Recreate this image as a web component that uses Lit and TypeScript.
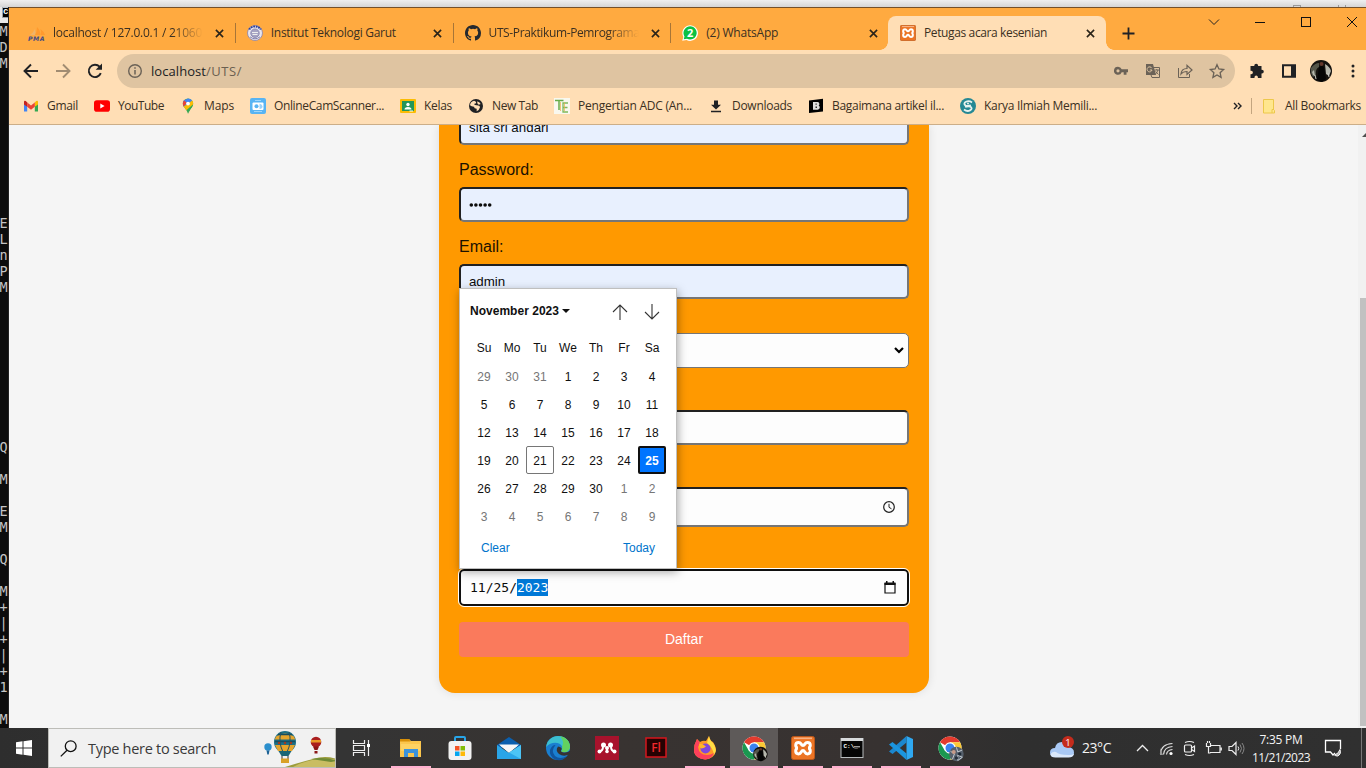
import { LitElement, html, svg, css, nothing } from "lit";
import { customElement, property, state } from "lit/decorators.js";
import { classMap } from "lit/directives/class-map.js";

/* A single line of text whose tracking is adjusted to fill a set width. */
@customElement("fit-text")
class FitText extends LitElement {
  static styles = css`
    :host { display: inline-block; white-space: pre; flex: none; }
    span { display: inline-block; }
  `;
  @property({ type: Number }) w = 0;
  @property() text = "";
  @state() spacing = 0;
  firstUpdated() {
    const span = this.renderRoot.querySelector("span") as HTMLElement;
    const natural = span.getBoundingClientRect().width;
    if (this.w && natural) this.spacing = (this.w - natural) / this.text.length;
  }
  render() {
    return html`<span style="letter-spacing:${this.spacing}px">${this.text}</span>`;
  }
}

const icon = (w: number, h: number, vb: string, body: unknown) =>
  html`<svg width=${w} height=${h} viewBox=${vb}>${body}</svg>`;

const xampp = svg`
  <rect x="0.5" y="0.5" width="23" height="23" rx="2" fill="#ec7424" stroke="#b9561a"/>
  <rect x="3" y="1.5" width="18" height="1.6" fill="#f7b183"/>
  <path d="M7.6 6.4c-2.1 0-2.9 1.400-2.900 2.900 0 1.700 1.300 2.700 2.300 2.700-1.100 0-2.300 1.200-2.300 3 0 1.600 1 2.900 2.900 2.900 2.900 0 2.300-3.300 4.400-3.300s1.500 3.300 4.400 3.300c1.900 0 2.900-1.300 2.900-2.900 0-1.800-1.200-3-2.300-3 1 0 2.300-1 2.300-2.700 0-1.500-.8-2.900-2.900-2.900-2.900 0-2.300 3.100-4.400 3.100s-1.500-3.100-4.400-3.100z" fill="none" stroke="#fff" stroke-width="3"/>`;

const chrome = svg`
  <circle cx="12" cy="12" r="11.500" fill="#fff"/>
  <path d="M12 12 2 6.200A11.600 11.600 0 0 1 22.100 6.300H12z" fill="#e33b2e"/>
  <path d="M12 6.300H22.100A11.600 11.600 0 0 1 12 23.600l5-8.700z" fill="#fcc934"/>
  <path d="M7 14.900 2 6.200A11.600 11.600 0 0 0 12 23.600l5-8.700z" fill="#1a9850"/>
  <circle cx="12" cy="12" r="5.700" fill="#fff"/><circle cx="12" cy="12" r="4.500" fill="#3b82f0"/>`;

const person = svg`
  <circle cx="12" cy="12" r="11" fill="#15120f"/>
  <path d="M2 9q4-5 8-5v4q-4 2-3 8l-3 2Q1 14 2 9z" fill="#55564a"/>
  <path d="M16 5q5 3 6 7l-2 5-3-2zM3 13l2-2 1 6-2-1z" fill="#b5b6ac"/>
  <circle cx="12.500" cy="5" r="2" fill="#63372c"/>
  <path d="M10 8q3-2 5 0l2 12-4 3-5-2z" fill="#050505"/>
  <path d="M19 14l1 4M6 16l1 4" stroke="#c9c9c2" stroke-width="1"/>`;

const favicons = {
  pma: icon(18, 16, "0 0 18 16", svg`
    <path d="M7 10Q9 7 9 2q4 4 3 8zM12.500 10q1-3 0-6 4 3 4.500 6z" fill="#ff9a2e"/>
    <path d="M2 10q3-2 5-6 1 3 0 6z" fill="#f0b46a"/>
    <text x="0" y="15.500" font-family="DejaVu Sans" font-weight="bold" font-style="italic" font-size="6.200" textLength="16.500" fill="#454c82">PMA</text>`),
  itg: icon(16, 16, "0 0 16 16", svg`
    <circle cx="8" cy="8" r="7.500" fill="#e8e5ee" stroke="#8883ad" stroke-width=".8"/>
    <path d="M2.200 4.500A7 7 0 0 1 13.800 4.500" fill="none" stroke="#30439b" stroke-width="2" stroke-dasharray="1.800 .7"/>
    <circle cx="8" cy="8.200" r="4.200" fill="#a7a4c3" stroke="#8f8db5"/><path d="M5 7.500h6M5.500 9.500h5" stroke="#eee"/>
    <path d="M3 11.800q5 4 10 0" fill="none" stroke="#8583ad"/>`),
  github: icon(16, 16, "0 0 16 16", svg`<path fill="#24292f" d="M8 0C3.580 0 0 3.580 0 8c0 3.540 2.290 6.530 5.470 7.590.4.070.55-.17.55-.38v-1.490c-2.010.37-2.530-.49-2.690-.94-.09-.23-.48-.94-.82-1.130-.28-.15-.68-.52-.01-.53.63-.01 1.080.58 1.230.82.72 1.210 1.870.87 2.330.66.070-.52.28-.87.51-1.070-1.780-.2-3.640-.89-3.640-3.950 0-.87.31-1.590.82-2.150-.08-.2-.36-1.020.08-2.120 0 0 .67-.21 2.200.82a7.600 7.600 0 0 1 4 0c1.530-1.040 2.200-.82 2.200-.82.44 1.100.16 1.920.08 2.120.51.56.82 1.270.82 2.150 0 3.070-1.870 3.750-3.650 3.950.29.25.54.73.54 1.480v2.200c0 .21.15.46.55.38A8 8 0 0 0 16 8c0-4.420-3.580-8-8-8z"/>`),
  wa: icon(16, 16, "0 0 16 16", svg`
    <path d="M.2 15.800 1.400 12A7.800 7.800 0 1 1 4.500 15z" fill="#fff"/>
    <path d="M1.700 14.300 2.500 11.500A6.600 6.600 0 1 1 5 13.800z" fill="#0bc142"/>
    <text x="8.200" y="12" text-anchor="middle" font-family="Open Sans" font-weight="bold" font-size="11" fill="#fff">2</text>`),
  xampp: icon(16, 16, "0 0 24 24", xampp),
};

const closeX = icon(9, 9, "0 0 9 9", svg`<path d="M.9.9l7.200 7.200M8.100.9.9 8.100" stroke="#2b2419" stroke-width="1.600"/>`);

const tabs = [
  { icon: favicons.pma, title: "localhost / 127.0.0.1 / 21060", w: 149, fade: true },
  { icon: favicons.itg, title: "Institut Teknologi Garut", w: 125 },
  { icon: favicons.github, title: "UTS-Praktikum-Pemrograma", w: 151, fade: true },
  { icon: favicons.wa, title: "(2) WhatsApp", w: 72 },
  { icon: favicons.xampp, title: "Petugas acara kesenian", w: 123, active: true },
];

const bookmarks = [
  { t: "Gmail", w: 31, i: icon(16, 16, "0 0 16 16", svg`
    <path d="M1 4v9.500h3.200V7z" fill="#4285f4"/><path d="M11.800 7v6.500H15V4z" fill="#34a853"/>
    <path d="M1 3.800v2.600l3.200 2.400V4.500L2.800 3Q1 2.300 1 3.800z" fill="#c5221f"/>
    <path d="M11.800 4.500v4.300L15 6.400V3.800Q15 2.300 13.200 3z" fill="#fbbc04"/>
    <path d="M4.200 4.500v4.300L8 11.700l3.800-2.900V4.500L8 7.400z" fill="#ea4335"/>`) },
  { t: "YouTube", w: 46, i: icon(16, 16, "0 0 16 16", svg`<rect x="0" y="2.300" width="16" height="11.400" rx="2.800" fill="#f00"/><path d="M6.300 5.500v5L10.600 8z" fill="#fff"/>`) },
  { t: "Maps", w: 30, i: icon(16, 16, "0 0 16 16", svg`
    <path d="M8 .4A5.200 5.200 0 0 0 2.800 5.600c0 3.800 3.700 5 5.200 10.200 1.500-5.200 5.200-6.400 5.200-10.200A5.200 5.200 0 0 0 8 .4z" fill="#34a853"/>
    <path d="M3.600 8.600 12 2.200q1.600 1.600 1.100 4.400L6.300 12.200Q5 10.500 3.600 8.600z" fill="#fbbc04"/>
    <path d="M8 .4q2.500 0 4.100 2L3.600 8.600Q2 4 4 2.200z" fill="#4285f4"/><path d="M4 2.200 7 5 3.600 8.600Q2 5 4 2.200z" fill="#ea4335"/>
    <path d="M9 10.500l4-4q-.3 2.200-2.500 4.700L8 15.800z" fill="#34a853"/><circle cx="8" cy="5.600" r="1.900" fill="#fff"/>`) },
  { t: "OnlineCamScanner...", w: 110, i: icon(16, 16, "0 0 16 16", svg`
    <rect width="16" height="16" rx="2" fill="#58b4f3"/><rect x="2.500" y="4.500" width="11" height="7.500" rx="1" fill="#fff"/>
    <circle cx="6.500" cy="8.300" r="2" fill="#58b4f3"/><path d="M9.500 5.500v5.500q3-.5 3-2.500t-3-3z" fill="#9dd2f7"/><path d="M5 2.500h6M4 13.500h8" stroke="#9fd6fb"/>`) },
  { t: "Kelas", w: 28, i: icon(16, 16, "0 0 16 16", svg`
    <rect y="1" width="16" height="14" rx="1" fill="#fbbc04"/><rect x="2" y="3" width="12" height="10" fill="#24965a"/>
    <circle cx="8" cy="6.500" r="1.700" fill="#fff"/><path d="M4.500 11.500q0-2.600 3.500-2.600t3.500 2.600z" fill="#fff"/><path d="M9.500 13h3.500" stroke="#fff"/>`) },
  { t: "New Tab", w: 46, i: icon(16, 16, "0 0 24 24", svg`
    <circle cx="12" cy="12" r="10.500" fill="#202124"/><path d="M9 4q4 1 3 4l-3 1q1 2 4 2 5 0 5 3l-2 4-3 2v-4q-4 0-4-3-4 0-6-2 0-5 6-7z" fill="#ffdeb5"/><path d="M14 5q4 2 5 4l-3 1-2-2z" fill="#ffdeb5"/>`) },
  { t: "Pengertian ADC (An...", w: 114, i: icon(16, 16, "0 0 16 16", svg`
    <rect width="16" height="16" fill="#f9f8ef"/><path d="M1 2.500h8.500M5 3v9" stroke="#67ad4b" stroke-width="1.500"/>
    <path d="M14 5H9v9h5M9 9.500h4.500" fill="none" stroke="#7db95d" stroke-width="1.300"/><path d="M6.500 4v9M10.500 4.500v9" stroke="#e8ae4a" stroke-width=".7"/>`) },
  { t: "Downloads", w: 60, i: icon(16, 16, "0 0 16 16", svg`<path d="M6 2.500h4v4.300h3L8 11.500 3 6.800h3zM3 12.700h10v1.600H3z" fill="#202124"/>`) },
  { t: "Bagaimana artikel il...", w: 112, i: icon(16, 16, "0 0 16 16", svg`
    <path d="M1 2.500 15 .8V13.500L1 15z" fill="#000"/><path fill-rule="evenodd" d="M5 4h4.600q1.800.1 1.800 2 0 1.100-.8 1.600 1.200.5 1.200 1.900 0 2.100-2.200 2.300H5zM7.600 5.600v1.200h1V5.600zM7.600 8.600v1.500h1.200V8.600z" fill="#ddd"/>`) },
  { t: "Karya Ilmiah Memili...", w: 113, i: icon(16, 16, "0 0 16 16", svg`
    <circle cx="8" cy="8" r="8" fill="#258894"/><path d="M12 4.500Q9 2.300 6 3.800T5.500 7.600q3 .8 5.400-.2M4 11.500q3 2.500 6 .9t.5-3.800q-2.800-.8-5.400.4" fill="none" stroke="#e8f2ee" stroke-width="1.800"/><circle cx="8" cy="5.500" r="1" fill="#e8f2ee"/>`) },
];

const folder = icon(12, 15, "0 0 12 15", svg`<path d="M.5.500h10V10.500l1 1V14H.5z" fill="#ffe68e" stroke="#ecc84b"/><path d="M9 14v-3.500h2" fill="none" stroke="#ecc84b"/>`);

const consoleRows: Record<number, string> = {
  0: "M", 1: "D", 2: "M", 12: "E", 13: "L", 14: "n", 15: "P", 16: "M", 26: "Q", 28: "M", 30: "E", 31: "M",
  33: "Q", 35: "M", 36: "+", 37: "|", 38: "+", 39: "|", 40: "+", 41: "1", 43: "M",
};

@customElement("console-strip")
class ConsoleStrip extends LitElement {
  static styles = css`
    :host { display: block; width: 9px; overflow: hidden; background: #0c0c0c; border-right: 1px solid #222; box-sizing: border-box;
      font: 13.5px/16px "DejaVu Sans Mono", monospace; color: #c4c4c4; }
    .title { height: 16px; padding: 0 0 0 2px; background: #e9e9e9; box-sizing: border-box; overflow: hidden; }
    .cmd { width: 16px; height: 12px; background: #000; border: 1px solid #9aa3a8; border-top: 2px solid #b9c4cf; box-sizing: border-box;
      color: #fff; font: bold 9px/9px "Liberation Mono", monospace; margin-top: -1px; }
    .row { height: 16px; margin-left: -.5px; }
    .rows { padding-top: 0; }
  `;
  render() {
    return html`<div class="title"><div class="cmd">c</div></div>
      <div class="rows">${Array.from({ length: 45 }, (_, i) => html`<div class="row">${consoleRows[i] ?? nothing}</div>`)}</div>`;
  }
}

@customElement("browser-chrome")
class BrowserChrome extends LitElement {
  static styles = css`
    :host { display: block; color: #3b3022; font: 12px/16px "Open Sans", "Noto Sans", sans-serif; }
    svg { display: block; flex: none; }
    .strip { height: 42px; background: #ffaa40; display: flex; padding-left: 8px; box-sizing: border-box; }
    .tab { width: 217.75px; height: 34px; margin-top: 8px; display: flex; align-items: center; padding: 0 12px; box-sizing: border-box; position: relative; flex: none; }
    .ico { width: 16px; margin-right: 8px; display: flex; justify-content: center; flex: none; }
    .title { flex: 1; overflow: hidden; height: 18px; line-height: 17px; }
    .fade { mask-image: linear-gradient(90deg, #000 78%, transparent 98%); }
    .title.fade { flex: none; width: 153px; margin-right: auto; }
    .close { width: 9px; margin-right: -1.5px; }
    .line { width: 1px; height: 20px; background: #a77537; position: absolute; right: -1px; top: 7px; }
    .active { background: #ffdeb5; border-radius: 8px 8px 0 0; }
    .active::before, .active::after { content: ""; position: absolute; bottom: 0; width: 8px; height: 8px; }
    .active::before { left: -8px; background: radial-gradient(circle at 0 0, transparent 7.5px, #ffdeb5 8px); }
    .active::after { right: -8px; background: radial-gradient(circle at 100% 0, transparent 7.5px, #ffdeb5 8px); }
    .plus { margin: 19px 0 0 16px; }
    .win { margin-left: auto; display: flex; align-items: center; height: 28px; padding-right: 6px; }
    .win svg { width: 16px; height: 16px; }
    .win svg:nth-child(1) { margin-right: 30px; }
    .win svg:nth-child(2), .win svg:nth-child(3) { margin-right: 30px; }
    .tools { height: 42px; background: #ffdeb5; display: flex; align-items: center; padding-left: 12px; }
    .nav { display: flex; gap: 12px; }
    .omni { width: 1118px; height: 34px; margin-left: 12px; border-radius: 17px; background: #dfc4a1; display: flex; align-items: center; padding: 0 8px; box-sizing: border-box; flex: none; font-size: 13px; color: #202124; }
    .omni .url { margin-left: 6px; }
    .path { color: #6b5f50; }
    .actions { margin-left: auto; display: flex; gap: 12px; }
    .ext { display: flex; gap: 10px; margin-left: 11px; align-items: center; }
    .marks { background: #ffdeb5; border-bottom: 1px solid #ccae88; display: flex; align-items: center; padding: 0 0 4px 14px; gap: 16px; box-sizing: border-box; height: 33px; }
    .mark { display: flex; align-items: center; flex: none; }
    .more { margin-left: auto; display: flex; align-items: center; padding-right: 5px; }
    .sep { height: 16px; width: 1px; background: #c3a57f; margin: 0 11px 0 9px; }
    .all { margin-left: 10px; }
  `;
  render() {
    const g = "#6b6257";
    return html`
      <div class="strip">
        ${tabs.map((t, i) => html`<div class=${classMap({ tab: true, active: !!t.active })}>
          <div class="ico">${t.icon}</div>
          <div class=${classMap({ title: true, fade: !!t.fade })}><fit-text .w=${t.w} .text=${t.title}></fit-text></div>
          <div class="close">${closeX}</div>
          ${i < 3 ? html`<div class="line"></div>` : nothing}
        </div>`)}
        <div class="plus">${icon(13, 13, "0 0 13 13", svg`<path d="M6.500.5v12M.5 6.500h12" stroke="#202124" stroke-width="1.800"/>`)}</div>
        <div class="win">
          ${icon(16, 16, "0 0 16 16", svg`<path d="M3 5.500l5 5 5-5" fill="none" stroke="#222"/>`)}
          ${icon(16, 16, "0 0 16 16", svg`<path d="M3 8.500h10" stroke="#111"/>`)}
          ${icon(16, 16, "0 0 16 16", svg`<rect x="3.500" y="3.500" width="9" height="9" fill="none" stroke="#111"/>`)}
          ${icon(16, 16, "0 0 16 16", svg`<path d="M3 3l10 10M13 3 3 13" stroke="#111"/>`)}
        </div>
      </div>
      <div class="tools">
        <div class="nav">
          ${icon(20, 20, "0 0 20 20", svg`<path d="M17 10H4M10 3.500 3.500 10l6.500 6.500" fill="none" stroke="#202124" stroke-width="1.900"/>`)}
          ${icon(20, 20, "0 0 20 20", svg`<path d="M3 10h13M10 3.500l6.500 6.500-6.500 6.500" fill="none" stroke="#a18c72" stroke-width="1.900"/>`)}
          ${icon(20, 20, "0 0 20 20", svg`<path d="M15.800 12.200A6.200 6.200 0 1 1 14.600 5.700L16 7.500" fill="none" stroke="#202124" stroke-width="1.900"/><path d="M17 2.500v6.300h-6.300z" fill="#202124"/>`)}
        </div>
        <div class="omni">
          ${icon(20, 20, "0 0 20 20", svg`<circle cx="10" cy="10" r="6.300" fill="none" stroke="${g}" stroke-width="1.400"/><path d="M10 9v4.500M10 6.200v1.600" stroke="${g}" stroke-width="1.500"/>`)}
          <fit-text class="url" .w=${55} .text=${"localhost"}></fit-text><fit-text class="path" .w=${36} .text=${"/UTS/"}></fit-text>
          <div class="actions">
            ${icon(20, 20, "0 0 20 20", svg`<path fill-rule="evenodd" d="M7 5.800a4 4 0 1 0 3.700 5.400h2v2.500h2.800v-2.500H17V8.300h-6.300A4 4 0 0 0 7 5.800zM7 8.200a1.600 1.600 0 1 1 0 3.200 1.600 1.600 0 0 1 0-3.200z" fill="${g}"/>`)}
            ${icon(20, 20, "0 0 20 20", svg`<path d="M8 6.500h8.500v10H9L8 14z" fill="none" stroke="${g}"/><path d="M3 3h7l3 11H3z" fill="${g}"/><path d="M8.800 7.200A2.500 2.500 0 1 0 9 9H6.800" fill="none" stroke="#dfc4a1"/><path d="M11.500 9H16M13.800 8v1M15 9q-1 3-3 4.500M12.500 10.500l3 3" fill="none" stroke="${g}" stroke-width=".9"/>`)}
            ${icon(20, 20, "0 0 20 20", svg`<path d="M3.500 7v9.500h11V13" fill="none" stroke="${g}"/><path d="M6 13q.5-5.500 6-5.500V4.300l5 4.700-5 4.500V10.500q-4 0-6 2.500z" fill="none" stroke="${g}" stroke-width="1.200"/>`)}
            ${icon(20, 20, "0 0 20 20", svg`<path d="M10 3.700l1.900 4.300 4.700.5-3.500 3.200 1 4.700L10 14l-4.100 2.400 1-4.700-3.500-3.200 4.700-.5z" fill="none" stroke="${g}" stroke-width="1.300"/>`)}
          </div>
        </div>
        <div class="ext">
          ${icon(22, 20, "0 0 22 20", svg`<path d="M5 5h3.300V4.600a1.900 1.900 0 0 1 3.800 0V5h3.400v3.700h.4a1.900 1.900 0 0 1 0 3.800h-.4V17h-3.600v-.7a1.700 1.700 0 0 0-3.400 0v.7H4.500v-3.800h.7a1.700 1.700 0 0 0 0-3.400H4.500V5z" fill="#202124"/>`)}
          ${icon(22, 20, "0 0 22 20", svg`<path fill-rule="evenodd" d="M4 3.200h14v13.600H4zM6 5.200v9.600h7V5.200z" fill="#202124"/>`)}
          ${icon(22, 22, "1 1 22 22", person)}
          ${icon(22, 20, "0 0 22 20", svg`<circle cx="11" cy="5" r="1.500" fill="#202124"/><circle cx="11" cy="10" r="1.500" fill="#202124"/><circle cx="11" cy="15" r="1.500" fill="#202124"/>`)}
        </div>
      </div>
      <div class="marks">
        ${bookmarks.map((b) => html`<div class="mark"><div class="ico">${b.i}</div><fit-text .w=${b.w} .text=${b.t}></fit-text></div>`)}
        <div class="more">
          ${icon(9, 8, "0 0 9 8", svg`<path d="M1 1l3 3-3 3M5 1l3 3-3 3" fill="none" stroke="#202124" stroke-width="1.400"/>`)}
          <div class="sep"></div>${folder}<fit-text class="all" .w=${76} .text=${"All Bookmarks"}></fit-text>
        </div>
      </div>`;
  }
}

const days = [29, 30, 31, ...Array.from({ length: 30 }, (_, i) => i + 1), 1, 2, 3, 4, 5, 6, 7, 8, 9];

@customElement("date-popup")
class DatePopup extends LitElement {
  static styles = css`
    :host { display: block; box-sizing: border-box; width: 218px; height: 281px; background: #fff; border: 1px solid #bfbfbf; box-shadow: 1px 3px 9px rgba(0, 0, 0, .35);
      font: 12px/28px "Liberation Sans", Arial, sans-serif; color: #101010; padding: 0 10px; }
    .head { display: flex; height: 44px; align-items: center; font-weight: bold; }
    .tri { border: 4px solid transparent; border-top: 4px solid #101010; border-bottom: 0; margin-left: 3px; }
    .arrows { margin-left: auto; display: flex; gap: 16px; padding: 2px 6px 0 0; }
    .grid { display: grid; grid-template-columns: repeat(7, 28px); text-align: center; }
    .names { height: 29px; box-sizing: border-box; padding-top: 1px; }
    .day { height: 28px; box-sizing: border-box; padding-top: 1px; }
    .out { color: #767676; }
    .today { border: 1px solid #767676; border-radius: 2px; padding: 0; line-height: 28px; }
    .sel { border: 2px solid #101010; border-radius: 2px; background: #0075ff; color: #fff; font-weight: bold; line-height: 26px; padding: 0; }
    .foot { display: flex; justify-content: space-between; padding: 4px 11px 0; color: #0074cc; }
  `;
  render() {
    return html`
      <div class="head"><fit-text .w=${89} .text=${"November 2023"}></fit-text><span class="tri"></span>
        <div class="arrows">
          ${icon(16, 16, "0 0 16 16", svg`<path d="M8 16V.8M1 8l7-7 7 7" fill="none" stroke="#333" stroke-width="1.100"/>`)}
          ${icon(16, 16, "0 0 16 16", svg`<path d="M8 0v15.200M1 8l7 7 7-7" fill="none" stroke="#333" stroke-width="1.100"/>`)}
        </div></div>
      <div class="grid names">${["Su", "Mo", "Tu", "We", "Th", "Fr", "Sa"].map((d) => html`<span>${d}</span>`)}</div>
      <div class="grid">${days.map((d, i) => html`<span class=${classMap({ day: true, out: i < 3 || i > 32, today: i === 23, sel: i === 27 })}>${d}</span>`)}</div>
      <div class="foot"><span>Clear</span><span>Today</span></div>`;
  }
}

@customElement("form-page")
class FormPage extends LitElement {
  static styles = css`
    :host { display: flex; height: 603px; overflow: hidden; background: #f5f5f5; font: 16px "Liberation Sans", Arial, sans-serif; color: #1c1200; }
    .main { flex: 1; padding-left: 430px; }
    .card { position: relative; width: 490px; height: 568px; box-sizing: border-box; background: #ff9900; border-radius: 0 0 16px 16px; padding: 0 20px; box-shadow: 0 0 10px rgba(0, 0, 0, .1); display: flex; flex-direction: column; }
    .label { height: 42px; line-height: 49px; box-sizing: border-box; flex: none; }
    .short { height: 34px; }
    .in { height: 35px; flex: none; box-sizing: border-box; border: 2px solid; border-color: #212121 #767676 #767676 #212121; border-radius: 5px; background: #fdfdfd; padding: 0 8px; display: flex; align-items: center; font-size: 13.333px; color: #0b0b0b; }
    .auto { background: #e8f0fe; }
    .top { margin-top: -15px; }
    .select { border: 1px solid #767676; justify-content: flex-end; padding-right: 4px; }
    .time { height: 40px; justify-content: flex-end; padding-right: 12px; }
    .date { height: 37px; border-color: #101010; outline: 1px solid #fff; padding: 0 11px 0 8px; font: 13px/17px "DejaVu Sans Mono", monospace; justify-content: space-between; }
    .segs { display: flex; margin-left: 1px; }
    .hl { background: #0078d7; color: #fff; height: 17px; }
    .btn { height: 35px; margin-top: 16px; background: #fa7a5c; border-radius: 4px; color: #fff; text-align: center; font-size: 14px; line-height: 35px; flex: none; }
    .bar { width: 8px; background: #f1f1f1; display: flex; flex-direction: column; align-items: flex-end; }
    .bar svg { display: block; margin-top: 8px; }
    .thumb { width: 6px; height: 428px; margin-top: 161px; background: #c1c1c1; }
    date-popup { position: absolute; left: 20px; top: 163px; }
    svg { flex: none; }
  `;
  render() {
    return html`
      <div class="main"><div class="card">
        <div class="in auto top"><fit-text .w=${79.5} .text=${"sita sri andari"}></fit-text></div>
        <div class="label">Password:</div>
        <div class="in auto">${icon(24, 6, "0 0 24 6", svg`${[2, 6.6, 11.2, 15.800, 20.400].map((x) => svg`<circle cx=${x + 0.3} cy="3" r="1.800" fill="#0b0b0b"/>`)}`)}</div>
        <div class="label">Email:</div>
        <div class="in auto"><fit-text .w=${36} .text=${"admin"}></fit-text></div>
        <div class="label short"></div>
        <div class="in select">${icon(10, 7, "0 0 10 7", svg`<path d="M1 1l4 4 4-4" fill="none" stroke="#000" stroke-width="2.200"/>`)}</div>
        <div class="label"></div>
        <div class="in"></div>
        <div class="label"></div>
        <div class="in time">${icon(12, 12, "0 0 12 12", svg`<circle cx="6" cy="6" r="5.300" fill="none" stroke="#222" stroke-width="1.200"/><path d="M6 2.800v3.500l2.500 1.500" fill="none" stroke="#222"/>`)}</div>
        <div class="label"></div>
        <div class="in date"><span class="segs"><span>11/25/</span><span class="hl">2023</span></span>${icon(12, 13, "0 0 12 13", svg`<path d="M1 2.500h10V12H1z" fill="none" stroke="#111" stroke-width="1.200"/><path d="M.5 1.500h11V4H.5zM2 0h1.500v2H2zM8.500 0H10v2H8.500z" fill="#111"/>`)}</div>
        <div class="btn">Daftar</div>
        <date-popup></date-popup>
      </div></div>
      <div class="bar">${icon(4, 4, "0 0 4 4", svg`<path d="M0 4 4 0v4z" fill="#505050"/>`)}<div class="thumb"></div></div>`;
  }
}

const apps = [
  { i: icon(24, 24, "1 0 24 24", svg`<g fill="none" stroke="#eee" stroke-width="1.200"><path d="M4.500 4v3.500h11V4M4.500 20v-3.500h11V20M4.500 9.500h11v5h-11zM19.500 4v16"/></g><rect x="18" y="8" width="3" height="3" fill="#fff"/>`) },
  { on: true, i: icon(24, 24, "0 0 24 24", svg`<path d="M1 3h9l2 2h10v16H1z" fill="#fbc64d"/><path d="M1 3h9l1.500 2.500H1z" fill="#d99008"/><path d="M2 8h19v7H2z" fill="#fdd263"/><path d="M5 13h14v8h-4v-4H9v4H5z" fill="#3c93db"/>`) },
  { i: icon(24, 24, "0 0 24 24", svg`<path d="M7 6V2q0-1 1-1h8q1 0 1 1v4" fill="none" stroke="#28a5e8" stroke-width="2"/><rect x=".5" y="5" width="23" height="19" rx="3" fill="#f2f2f2"/><path d="M7 10h4.500v4.500H7z" fill="#f35325"/><path d="M12.500 10H17v4.500h-4.500z" fill="#81bc06"/><path d="M7 15.500h4.500V20H7z" fill="#05a6f0"/><path d="M12.500 15.500H17V20h-4.500z" fill="#ffba08"/>`) },
  { i: icon(24, 24, "0 0 24 24", svg`<path d="M0 9 12 1l12 8v3H0z" fill="#0b5fae"/><path d="M2 8.500h20L12 17z" fill="#f5f7f8"/><path d="M0 9l12 8 12-8v14H0z" fill="#2aa5e8"/><path d="M3 9.500h18l-9 6.700z" fill="#f7f7f7"/><path d="M12 16.500 24 9v14z" fill="#4cc4f5"/>`) },
  { i: icon(24, 24, "0 0 24 24", svg`
    <circle cx="12" cy="12" r="12" fill="#1a7fd0"/>
    <path d="M.2 11C1 4 6 0 12 0c7 0 12 5 12 10.500 0 5-5 7-9 5 0 0 2-2 1-5C14.500 6 5 5 .2 11z" fill="#3cbfd0"/>
    <path d="M14 .2c6 .8 10 5.300 10 10.300 0 5-5 7-9 5 0 0 2-2 1-5 2-3 1-7-2-10.300z" fill="#62d25f"/>
    <path d="M9.500 9q-5 6-.5 11 5 4 12 0-5 6-12 3.500Q3 20 4 14q2-5 5.500-5z" fill="#10559f"/>
    <path d="M12 10.500q-3 4 1 7.500 4.500 3 10 .5l1.500-4q-3 2.500-7 2-4-1-2-3 1-2-3.500-3z" fill="#363332"/>`) },
  { i: icon(24, 24, "0 0 24 24", svg`<rect width="24" height="24" fill="#a8122c"/><g fill="#fff"><circle cx="8.500" cy="9" r="2.500"/><circle cx="15.500" cy="9" r="2.500"/><circle cx="12" cy="12" r="2"/><circle cx="4.500" cy="15.500" r="2"/><circle cx="12" cy="15.500" r="1.800"/><circle cx="19.500" cy="15.500" r="2"/></g><path d="M5 15q3 0 3-5M19 15q-3 0-3-5M12 16v-4" fill="none" stroke="#fff" stroke-width="2"/>`) },
  { i: icon(24, 24, "0 0 24 24", svg`<rect x="2" y="2" width="20" height="19" fill="#260202" stroke="#d5161c" stroke-width="1.500"/><text x="12" y="16" text-anchor="middle" font-family="Open Sans" font-size="12" font-weight="600" fill="#f2282c">Fl</text>`) },
  { on: true, i: icon(24, 24, "0 0 24 24", svg`
    <path d="M1.500 9 4 3l3 3q3-2 6-1l3-5q1 5 4 6 4 6 2.500 10-2 7-10 7.500Q3 23 1 16z" fill="#ff9a25"/><path d="M16 0q1 5 4 7 5 7 1 12-1-7-7-12z" fill="#ffde45"/>
    <path d="M1.500 9 4 3l3 4-2 4q1 8 9 8 4 0 7-2-3 6.500-9 6.500Q3 23 1 16z" fill="#fc3f5b"/><circle cx="12.500" cy="12.500" r="5" fill="#8048dc"/><path d="M6 7.500q4 0 7 3-2 2-5 2Q6 11 6 7.500z" fill="#ffb62c"/>`) },
  { on: true, cur: true, i: icon(24, 24, "0 0 24 24", svg`${chrome}<g transform="translate(10.500 10) scale(.66)">${person}</g>`) },
  { on: true, i: icon(24, 24, "0 0 24 24", xampp) },
  { on: true, i: icon(24, 24, "0 0 24 24", svg`<rect x="1" y="2.500" width="22" height="19" fill="#050505" stroke="#b8bcbe"/><rect x="1" y="2" width="22" height="3" fill="#d7dadc"/><text x="3.500" y="11.500" font-family="Liberation Mono" font-weight="bold" font-size="6" fill="#fff">C:\\_</text><path d="M14 10.800h6" stroke="#ddd"/>`) },
  { on: true, i: icon(24, 24, "0 0 24 24", svg`<path d="M17.500 0 24 3v18l-6.500 3z" fill="#2fa8f1"/><path d="M17.500 0v6.500L3.500 18 0 15.500z" fill="#1b87cf"/><path d="M0 8.500 3.500 6l14 11.500V24z" fill="#1b95df"/>`) },
  { on: true, i: icon(24, 24, "0 0 24 24", svg`${chrome}<g transform="translate(10.500 10) scale(.66)"><circle cx="12" cy="12" r="11" fill="#56606c"/><path d="M3 8l6 4-3 8M12 2l2 7 7-3M14 14l7 3-7 5z" fill="none" stroke="#c3cad0" stroke-width="1.500"/><circle cx="8" cy="9" r="3" fill="#c79a88"/><circle cx="17" cy="12" r="2.500" fill="#1c2733"/><circle cx="12" cy="18" r="2.500" fill="#27313c"/></g>`) },
];

@customElement("task-bar")
class TaskBar extends LitElement {
  static styles = css`
    :host { display: flex; height: 40px; background: linear-gradient(90deg, #2e2e2e 0, #343434 25%, #383331 45%, #373231 65%, #2f2f2f 75%, #303030 100%); color: #f4f4f4; font: 12px/18px "Open Sans", "Noto Sans", sans-serif; }
    svg { display: block; flex: none; overflow: visible; }
    .start { width: 48px; display: flex; align-items: center; justify-content: center; }
    .search { width: 288px; box-sizing: border-box; background: #f1f1f1; border: 1px solid #bdbdb8; display: flex; align-items: center; padding-left: 11px; color: #3a3a3a; font-size: 14.500px; overflow: hidden; margin-right: 1px; }
    .search fit-text { margin-left: 11px; padding-top: 1px; }
    .search .art { margin-left: auto; }
    .art svg { overflow: hidden; }
    .app { width: 49px; height: 40px; flex: none; display: flex; justify-content: center; align-items: center; position: relative; }
    .cur { background: linear-gradient(90deg, transparent 1px, #5e5a59 1px); }
    .on::after { content: ""; position: absolute; bottom: 0; width: 40px; height: 2px; background: #ffb0cf; }
    .cur::after { width: 48px; right: 0; }
    .tray { margin-left: auto; display: flex; align-items: center; }
    .temp { margin: 0 23px 0 7px; font-size: 14px; }
    .ti { display: flex; gap: 6.500px; }
    .clock { width: 64px; margin-left: 4px; display: flex; flex-direction: column; align-items: center; padding-top: 1px; }
    .note { margin-left: 11px; }
    .edge { width: 1px; height: 40px; background: #777; margin: 0 4px 0 19px; }
  `;
  render() {
    return html`
      <div class="start">${icon(16, 16, "0 0 16 16", svg`<path d="M0 2.200 6.500 1.300V7.500H0zM7.500 1.200 16 0v7.500H7.500zM0 8.500h6.500v6.200L0 13.800zM7.500 8.500H16V16L7.500 14.800z" fill="#fff"/>`)}</div>
      <div class="search">
        ${icon(17, 17, "0 0 17 17", svg`<circle cx="10.700" cy="6.200" r="5.400" fill="none" stroke="#111" stroke-width="1.300"/><path d="M7 10.200.8 16.400" stroke="#111" stroke-width="1.300"/>`)}
        <fit-text .w=${128} .text=${"Type here to search"}></fit-text>
        <div class="art">${icon(72, 38, "0 0 72 38", svg`
          <path d="M22 38q16-5 28-8 12-4 24 0v8z" fill="#9c9c3c"/><path d="M36 35q20-8 38-4v7H30z" fill="#c9bd62"/><path d="M48 30q14-3 26 2l-6 1z" fill="#6f8a35"/>
          <circle cx="5" cy="18" r="3.700" fill="#2b8fcd"/><path d="M3.500 21.500h3l-.8 4h-1.400z" fill="#1c6194"/>
          <circle cx="22" cy="13" r="11" fill="#1d6f84"/><path d="M13 7.500q9-6 18 0l1.200 3H11.800zM12 16h20l-3 6H15z" fill="#e6a52c"/><path d="M15 5.500h14M12 12.500h20" stroke="#174d61" stroke-width="1.500"/><path d="M18 3q-3 10 2 20M26 3q3 10-2 20" fill="none" stroke="#245260"/>
          <path d="M15.500 22h13l-3 5h-7z" fill="#1a6675"/><path d="M19 27v5M25 27v5" stroke="#333"/><rect x="18" y="29.500" width="8" height="4.500" fill="#d9a128"/><g fill="#a33a20"><circle cx="16" cy="14" r="1.200"/><circle cx="22" cy="14" r="1.200"/><circle cx="28" cy="14" r="1.200"/></g>
          <circle cx="53" cy="13" r="5.300" fill="#aa1f1e"/><path d="M48 11h10v2.500H48z" fill="#e99a27"/><path d="M50 17.500h6l-1.500 3.500h-3z" fill="#8b1717"/><rect x="51.500" y="22" width="3" height="2.500" fill="#8b1717"/>`)}</div>
      </div>
      ${apps.map((a) => html`<div class=${classMap({ app: true, on: !!a.on, cur: !!a.cur })}>${a.i}</div>`)}
      <div class="tray">
        ${icon(26, 26, "0 0 26 26", svg`<path d="M6 22q-5 0-5-4.500T6 13q1-6 7-6 5 0 6 5 6 .5 6 5.500 0 4.500-5 4.500z" fill="#a9c9f5"/><path d="M1.500 19q0 3.500 5 3.500h13q5 0 5.500-4-2 2-6 1.500Q10 20 7 17q-3-1-5.500 2z" fill="#dbe9fc"/><circle cx="19" cy="7" r="6" fill="#c42b1c"/><text x="19" y="10.800" text-anchor="middle" font-family="Open Sans" font-size="9.500" fill="#fff">1</text>`)}
        <fit-text class="temp" .w=${29} .text=${"23°C"}></fit-text>
        <div class="ti">
          ${icon(17, 17, "0 0 17 17", svg`<path d="M3 11l5.500-5.500L14 11" fill="none" stroke="#eee" stroke-width="1.300"/>`)}
          ${icon(17, 17, "0 0 17 17", svg`<g fill="none" stroke="#ddd" stroke-width="1.200"><path d="M2.500 14Q3 4 14.500 3.500M5.500 14.500Q6 7 14.500 6.500M8.500 14.500Q9 10 14.500 9.500"/></g><circle cx="13" cy="13.500" r="1.600" fill="#fff"/><path d="M2 8v7h3z" fill="#999"/>`)}
          ${icon(17, 17, "0 0 17 17", svg`<g fill="none" stroke="#eee" stroke-width="1.200"><rect x="3.500" y="5" width="7" height="7" rx="1"/><path d="M10.500 8l3-2v5.500l-3-2M4 2.500Q8.500.5 13 2.500M4 14.500q4.500 2 9 0"/></g>`)}
          ${icon(17, 17, "0 0 17 17", svg`<g fill="none" stroke="#eee" stroke-width="1.200"><path d="M6 5.500h9v7H5M16.300 7.500v3M1.500 3v3.500h4V3M3.500 6.500V13h2M2.500 1v2M4.500 1v2"/></g>`)}
          ${icon(17, 17, "0 0 17 17", svg`<path d="M1 6.500h3l4-4v12l-4-4H1z" fill="none" stroke="#eee" stroke-width="1.200"/><path d="M10 6.500q1.500 2 0 4" fill="none" stroke="#eee"/><path d="M12 4.500q3 4 0 8M14 3q4 5.500 0 11" fill="none" stroke="#888"/>`)}
        </div>
        <div class="clock"><fit-text .w=${43} .text=${"7:35 PM"}></fit-text><fit-text .w=${58} .text=${"11/21/2023"}></fit-text></div>
        <div class="note">${icon(18, 18, "0 0 18 18", svg`<path d="M11 14l-2 2-2.500-3H1.500V1.500h15V10" fill="none" stroke="#fff" stroke-width="1.300"/><path d="M16 10.500q1.500 5-2.500 6.500-2 0-3-1 4-1 5.500-5.500z" fill="#bbb" stroke="#fff"/>`)}</div>
        <div class="edge"></div>
      </div>`;
  }
}

@customElement("app-root")
class AppRoot extends LitElement {
  static styles = css`
    :host { display: flex; flex-direction: column; width: 1366px; height: 768px; overflow: hidden; background: #0c0c0c; }
    .behind { height: 7px; background: linear-gradient(#efefef, #d6d6d6); display: flex; justify-content: flex-end; align-items: flex-end; gap: 37px; padding-right: 20px; box-sizing: border-box; flex: none; }
    .behind span { width: 8px; height: 2px; border: 1px solid #999; border-bottom: 0; box-sizing: border-box; }
    .behind span:last-child { border-top: 0; }
    .row { display: flex; height: 721px; flex: none; }
    .win { flex: 1; border-top: 1px solid #755028; height: 721px; box-sizing: border-box; min-width: 0; overflow: hidden; }
  `;
  render() {
    return html`
      <div class="behind"><span></span><span></span></div>
      <div class="row">
        <console-strip></console-strip>
        <div class="win"><browser-chrome></browser-chrome><form-page></form-page></div>
      </div>
      <task-bar></task-bar>`;
  }
}
